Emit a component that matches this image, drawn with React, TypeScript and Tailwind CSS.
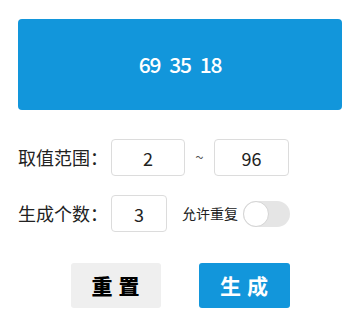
import { useState } from 'react'

const FONT = { fontFamily: '"Noto Sans CJK SC", "Noto Sans", sans-serif' }

export default function App() {
  const [min, setMin] = useState('2')
  const [max, setMax] = useState('96')
  const [count, setCount] = useState('3')
  const [repeat, setRepeat] = useState(false)
  const nums = ['69', '35', '18']

  return (
    <div className="w-[360px] h-[328px] bg-white px-[18px] pt-[19px]" style={FONT}>
      <div className="flex h-[91px] items-center justify-center gap-[9px] rounded-[4px] bg-[#1296db] text-[21px] font-medium tracking-[-1.2px] text-white">
        {nums.map((n) => (
          <span key={n}>{n}</span>
        ))}
      </div>

      <div className="mt-[29px] flex items-center">
        <span className="w-[93px] text-[18px] text-[#222]">取值范围：</span>
        <input
          value={min}
          onChange={(e) => setMin(e.target.value)}
          className="h-[37px] w-[74px] rounded-[4px] border border-[#dcdcdc] text-center text-[18px] text-[#222] outline-none"
        />
        <span className="w-[29px] text-center text-[15px] text-[#555]">~</span>
        <input
          value={max}
          onChange={(e) => setMax(e.target.value)}
          className="h-[37px] w-[75px] rounded-[4px] border border-[#dcdcdc] text-center text-[18px] text-[#222] outline-none"
        />
      </div>

      <div className="mt-[19px] flex items-center">
        <span className="w-[93px] text-[18px] text-[#222]">生成个数：</span>
        <input
          value={count}
          onChange={(e) => setCount(e.target.value)}
          className="h-[37px] w-[56px] rounded-[4px] border border-[#dcdcdc] text-center text-[18px] text-[#222] outline-none"
        />
        <span className="ml-[15px] text-[14px] text-[#222]">允许重复</span>
        <button
          onClick={() => setRepeat(!repeat)}
          className={
            repeat
              ? 'ml-[5px] flex h-[26px] w-[47px] items-center justify-end rounded-full bg-[#1296db]'
              : 'ml-[5px] flex h-[26px] w-[47px] items-center justify-start rounded-full bg-[#e5e5e5]'
          }
        >
          <span className="h-[26px] w-[26px] rounded-full border border-[#d4d4d4] bg-white" />
        </button>
      </div>

      <div className="mt-[31px] flex justify-center gap-[38px]">
        <button
          onClick={() => {
            setMin('2')
            setMax('96')
            setCount('3')
          }}
          className="h-[45px] w-[90px] rounded-[3px] bg-[#efefef] pl-[6px] text-[21px] font-black tracking-[6px] text-black"
        >
          重置
        </button>
        <button className="h-[45px] w-[91px] rounded-[3px] bg-[#1296db] pl-[6px] text-[21px] font-bold tracking-[6px] text-white">
          生成
        </button>
      </div>
    </div>
  )
}
